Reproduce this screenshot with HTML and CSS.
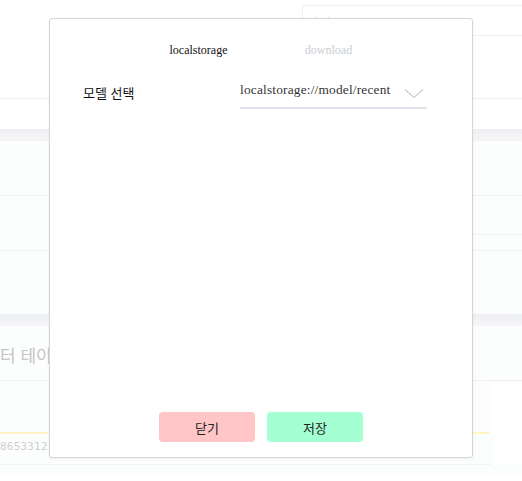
FILE: index.html
```html
<!DOCTYPE html>
<html lang="ko">
<head>
<meta charset="utf-8">
<link rel="stylesheet" href="styles.css">
</head>
<body>
<div class="page">
  <div class="top">
    <div class="search"><span class="search-text">Select</span></div>
  </div>
  <div class="band"></div>
  <div class="row r1"></div>
  <div class="row r2"><div class="rline"></div></div>
  <div class="row r3"></div>
  <div class="band"></div>
  <div class="title-row"><span class="title">터 테이블</span></div>
  <div class="gap-row"></div>
  <div class="id-row"><span class="id">8653312</span></div>
  <div class="foot-line"></div>
</div>

<div class="modal">
  <div class="tabs">
    <div class="tab active">localstorage</div>
    <div class="tab">download</div>
  </div>
  <div class="form-row">
    <div class="label">모델 선택</div>
    <div class="select">
      <span class="select-text">localstorage://model/recent</span>
      <svg class="chev" width="20" height="11" viewBox="0 0 20 11"><path d="M1 1.5 L10 9.5 L19 1.5" fill="none" stroke="#c9cdd6" stroke-width="1.2"/></svg>
    </div>
  </div>
  <div class="actions">
    <button class="btn close">닫기</button>
    <button class="btn save">저장</button>
  </div>
</div>
</body>
</html>
```
FILE: styles.css
```css
html, body {
  margin: 0;
  padding: 0;
  background: #fff;
  overflow: hidden;
}
body {
  width: 522px;
  height: 481px;
  position: relative;
  font-family: "Noto Sans CJK KR", "Noto Sans", sans-serif;
}
.page {
  display: flex;
  flex-direction: column;
}
.top {
  height: 99px;
  border-bottom: 1px solid #f0f0f0;
  padding-top: 5px;
  box-sizing: border-box;
  display: flex;
  justify-content: flex-end;
}
.search {
  width: 220px;
  height: 31px;
  box-sizing: border-box;
  border: 1px solid #f0f0f0;
  border-right: none;
  border-radius: 3px 0 0 3px;
  padding: 6px 10px;
  font-size: 12px;
  color: #eee;
}
.band {
  margin-top: 30px;
  height: 12px;
  background: linear-gradient(#eeeff3, #f6f6f9);
}
.row {
  background: #fcfefe;
  border-bottom: 1px solid #f0f1f1;
}
.r1 { height: 54px; }
.r2 { height: 54px; display: flex; flex-direction: column; }
.rline {
  margin-top: 38px;
  margin-left: 473px;
  border-bottom: 1px solid #f0f1f1;
}
.r3 { height: 63px; border-bottom: none; }
.r3 + .band { margin-top: 0; }
.title-row {
  height: 54px;
  border-bottom: 1px solid #f0f0f0;
  background: #fcfefe;
  display: flex;
  align-items: center;
  overflow: hidden;
}
.title {
  font-size: 17px;
  color: #c4c4c4;
  white-space: nowrap;
  padding-top: 2px;
}
.gap-row {
  height: 51px;
  width: 490px;
  border-bottom: 2px solid #fff6c6;
  background: #fcfefe;
}
.id-row {
  height: 30px;
  width: 493px;
  border-bottom: 1px solid #f3f6f6;
  background: #fcfefe;
  overflow: hidden;
  display: flex;
  align-items: center;
}
.id {
  font-family: "DejaVu Sans Mono", monospace;
  font-size: 11px;
  color: #cfcfcf;
  letter-spacing: 0.2px;
  padding-bottom: 5px;
}
.foot-line { height: 10px; background: #fcfefe; }

.modal {
  position: absolute;
  left: 49px;
  top: 18px;
  width: 424px;
  height: 440px;
  box-sizing: border-box;
  background: #fff;
  border: 1px solid #d5d5d5;
  border-radius: 3px;
  box-shadow: 0 1px 3px rgba(0,0,0,0.06);
  display: flex;
  flex-direction: column;
  padding: 23px 0 15px;
}
.tabs {
  display: flex;
  justify-content: center;
  padding-left: 5px;
}
.tab {
  width: 130px;
  text-align: center;
  font-family: "Liberation Serif", serif;
  font-size: 12px;
  line-height: 17px;
  color: #c9ccd3;
}
.tab.active { color: #111; }
.form-row {
  display: flex;
  align-items: flex-start;
  margin-top: 22px;
  padding-left: 33px;
}
.label {
  width: 157px;
  font-size: 13px;
  line-height: 18px;
  color: #111;
  padding-top: 3px;
}
.select {
  width: 187px;
  height: 28px;
  box-sizing: border-box;
  border-bottom: 2px solid #e1e4ea;
  display: flex;
  justify-content: space-between;
  padding-top: 0;
}
.select-text {
  font-family: "Liberation Serif", serif;
  font-size: 13.33px;
  line-height: 18px;
  color: #333;
  letter-spacing: 0.2px;
}
.chev { margin-top: 7px; margin-right: 3px; }
.actions {
  margin-top: auto;
  display: flex;
  justify-content: center;
  gap: 12px;
}
.btn {
  width: 96px;
  height: 30px;
  border: none;
  border-radius: 4px;
  font-family: "Noto Sans CJK KR", sans-serif;
  font-size: 13px;
  color: #222;
  padding: 0;
}
.close { background: #ffc5c7; }
.save { background: #a4ffd2; }
```
